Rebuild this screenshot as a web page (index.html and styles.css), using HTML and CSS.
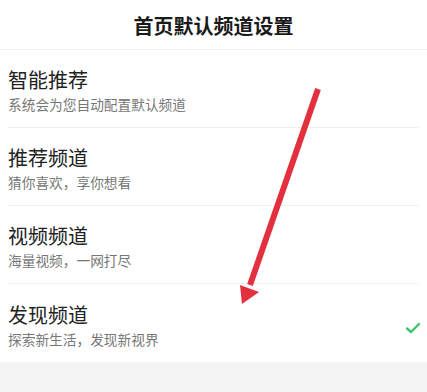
FILE: index.html
```html
<!DOCTYPE html>
<html lang="zh">
<head>
<meta charset="utf-8">
<link rel="stylesheet" href="styles.css">
</head>
<body>
<div class="page">
  <header class="header">首页默认频道设置</header>
  <ul class="list">
    <li class="item">
      <div class="texts">
        <div class="title">智能推荐</div>
        <div class="sub">系统会为您自动配置默认频道</div>
      </div>
    </li>
    <li class="item">
      <div class="texts">
        <div class="title">推荐频道</div>
        <div class="sub">猜你喜欢，享你想看</div>
      </div>
    </li>
    <li class="item">
      <div class="texts">
        <div class="title">视频频道</div>
        <div class="sub">海量视频，一网打尽</div>
      </div>
    </li>
    <li class="item last">
      <div class="texts">
        <div class="title">发现频道</div>
        <div class="sub">探索新生活，发现新视界</div>
      </div>
      <svg class="check" width="16" height="12" viewBox="0 0 16 12"><path d="M2 6.5 L6 10 L14 2" fill="none" stroke="#3cc46a" stroke-width="2.4" stroke-linecap="round" stroke-linejoin="round"/></svg>
    </li>
  </ul>
  <div class="footer"></div>
  <svg class="arrow" width="427" height="392" viewBox="0 0 427 392">
    <line x1="318" y1="89" x2="250" y2="285" stroke="#e2303e" stroke-width="6"/>
    <polygon points="240,285 259,292 242,304" fill="#e2303e"/>
  </svg>
</div>
</body>
</html>
```
FILE: styles.css
```css
html, body {
  margin: 0;
  padding: 0;
  background: #f4f4f4;
}
.page {
  position: relative;
  width: 427px;
  height: 392px;
  font-family: "Noto Sans CJK SC", "Noto Sans", sans-serif;
  overflow: hidden;
}
.header {
  height: 50px;
  background: #fff;
  border-bottom: 1px solid #efefef;
  box-sizing: border-box;
  display: flex;
  align-items: center;
  justify-content: center;
  font-size: 20px;
  font-weight: 700;
  color: #1a1a1a;
  padding-top: 2px;
}
.list {
  list-style: none;
  margin: 0;
  padding: 0 8px;
  background: #fff;
}
.item {
  height: 78px;
  box-sizing: border-box;
  border-bottom: 1px solid #f0f0f0;
  display: flex;
  align-items: center;
  justify-content: space-between;
  padding-top: 5px;
}
.item.last {
  border-bottom: none;
}
.texts {
  display: flex;
  flex-direction: column;
  gap: 2px;
}
.title {
  font-size: 20px;
  line-height: 24px;
  color: #222;
}
.sub {
  font-size: 13.7px;
  line-height: 20px;
  color: #777;
}
.check {
  margin-right: -2px;
  margin-top: 4px;
}
.footer {
  height: 30px;
  background: #f4f4f4;
}
.arrow {
  position: absolute;
  left: 0;
  top: 0;
  pointer-events: none;
}
```
